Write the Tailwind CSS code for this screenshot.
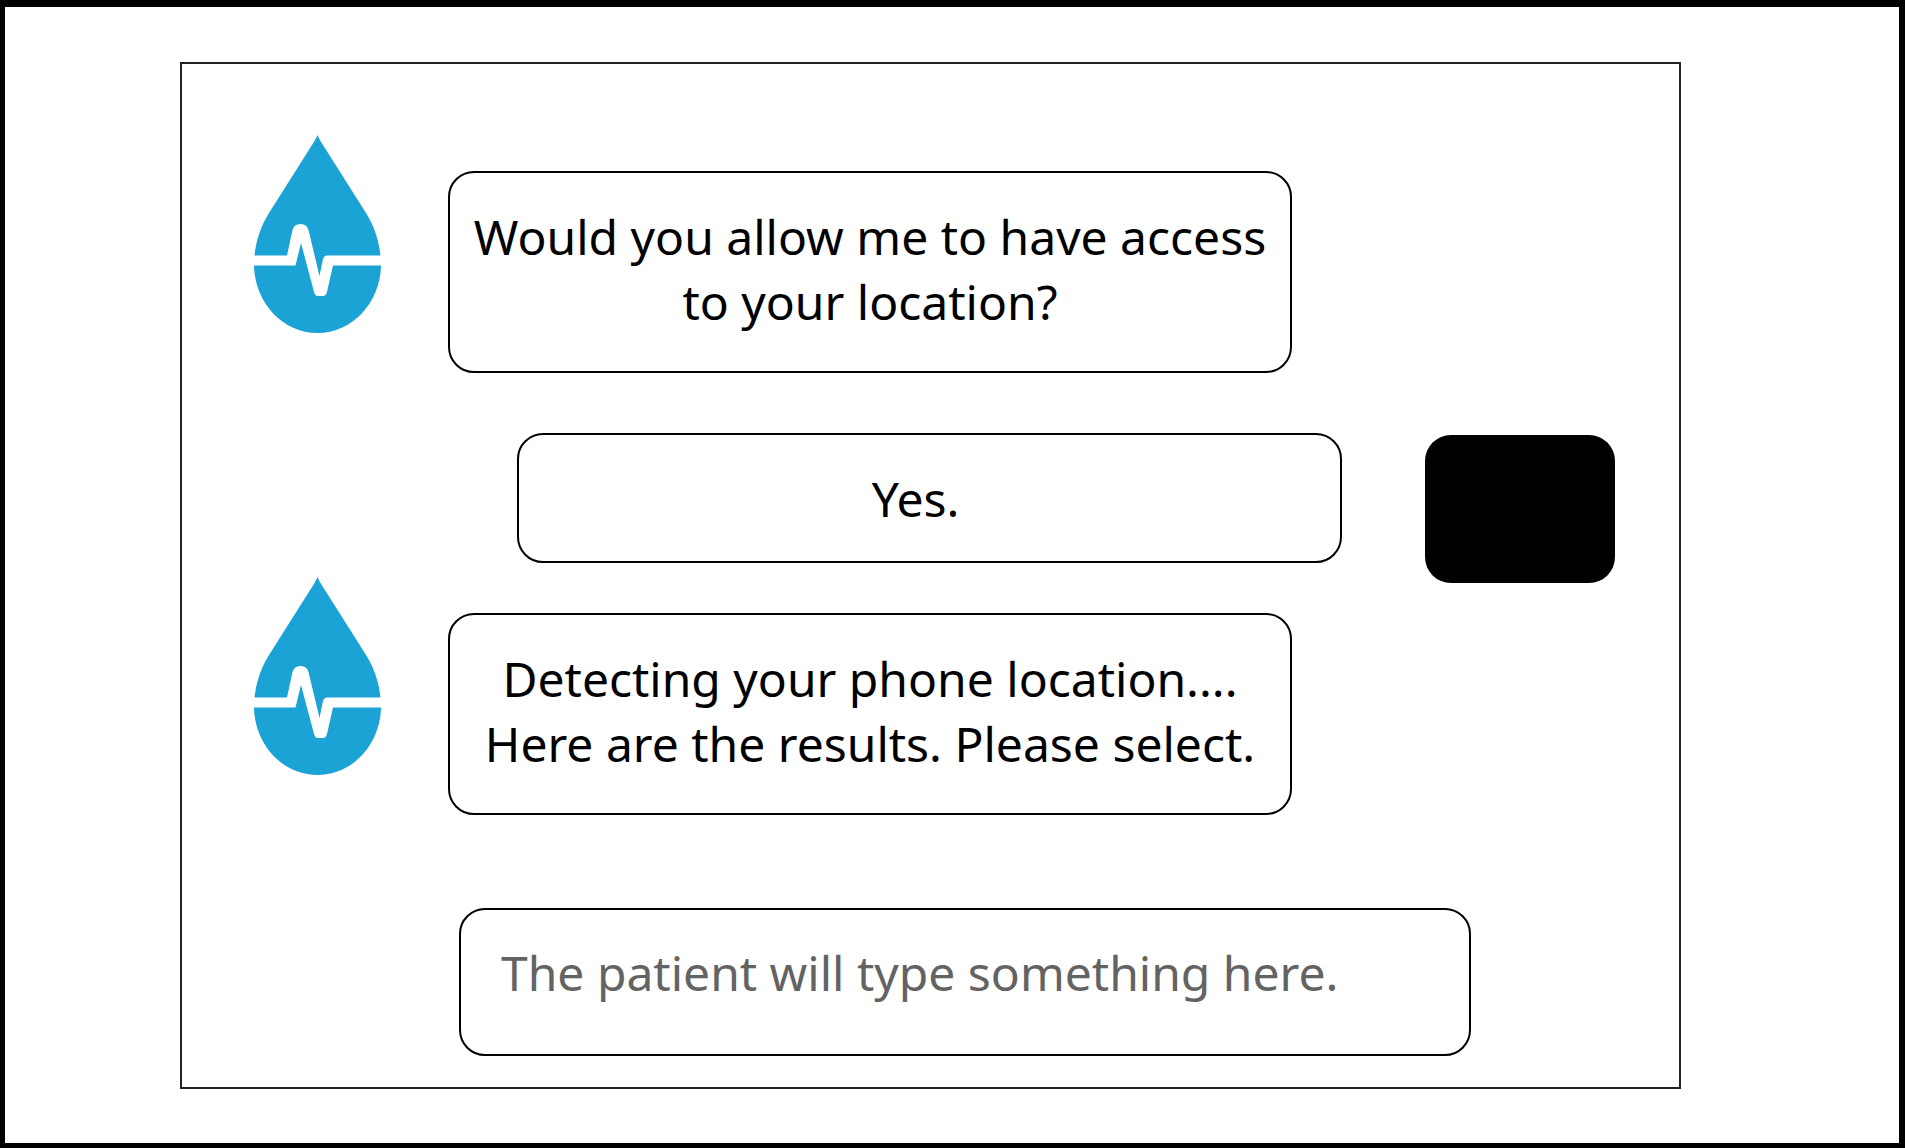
<!DOCTYPE html>
<html lang="en">
<head>
<meta charset="utf-8">
<title>Patient chat</title>
<script src="https://cdn.jsdelivr.net/npm/@tailwindcss/browser@4"></script>
</head>
<body class="min-h-screen flex flex-col bg-white border-black border-t-[7px] border-l-[5px] border-r-[6px] border-b-[5px] text-black text-[48px] leading-[65px] font-['Noto_Sans',sans-serif]">
<svg class="hidden">
  <symbol id="drop" viewBox="0 0 127 198">
    <path fill="#1ba3d5" d="M63.5 0Q65 4 69 10L112 78C122 94 127 112 127 131C126 168 98 198 63.500 198S1 168 0 131C0 112 5 94 15 78L58 10Q62 4 63.500 0Z"/>
    <path fill="#fff" d="M-1 120.500H33L38.500 95Q40 89 46.500 89Q53 89 54.500 95L65.500 141L69 124Q70 120.500 73 120.500H128V130.500H79L73 157Q72 161 69 161H64Q61 161 60 157L47 108L41.500 130.500H-1Z"/>
  </symbol>
</svg>
<main class="mt-[55px] mb-[53px] ml-[175px] mr-[218px] border-2 border-[#222] pt-[71px] pb-[31px]">
  <div class="flex items-start pl-[72px] pr-[387px]">
    <svg class="w-[127px] h-[198px] shrink-0" role="img" aria-label="Assistant"><use href="#drop"/></svg>
    <p class="ml-[67px] mt-9 h-[202px] flex-1 rounded-[26px] border-2 border-black pt-[31px] text-center">Would you allow me to have access<br>to your location?</p>
  </div>
  <div class="mt-[60px] flex h-36 items-start pl-[335px] pr-16">
    <p class="h-[130px] flex-1 rounded-[26px] border-2 border-black pt-[31px] pr-7 text-center">Yes.</p>
    <div class="ml-[83px] mt-0.5 h-[148px] w-[190px] shrink-0 rounded-[26px] bg-black" role="img" aria-label="Patient"></div>
  </div>
  <div class="flex items-start pl-[72px] pr-[387px]">
    <svg class="w-[127px] h-[198px] shrink-0" role="img" aria-label="Assistant"><use href="#drop"/></svg>
    <p class="ml-[67px] mt-9 h-[202px] flex-1 rounded-[26px] border-2 border-black pt-[31px] text-center">Detecting your phone location....<br>Here are the results. Please select.</p>
  </div>
  <form class="mt-[93px] flex pl-[277px] pr-52">
    <input type="text" aria-label="Message" placeholder="The patient will type something here." class="h-[148px] min-w-0 flex-1 rounded-[26px] border-2 border-black pl-10 pb-5 placeholder:text-[#636363]">
  </form>
</main>
</body>
</html>
